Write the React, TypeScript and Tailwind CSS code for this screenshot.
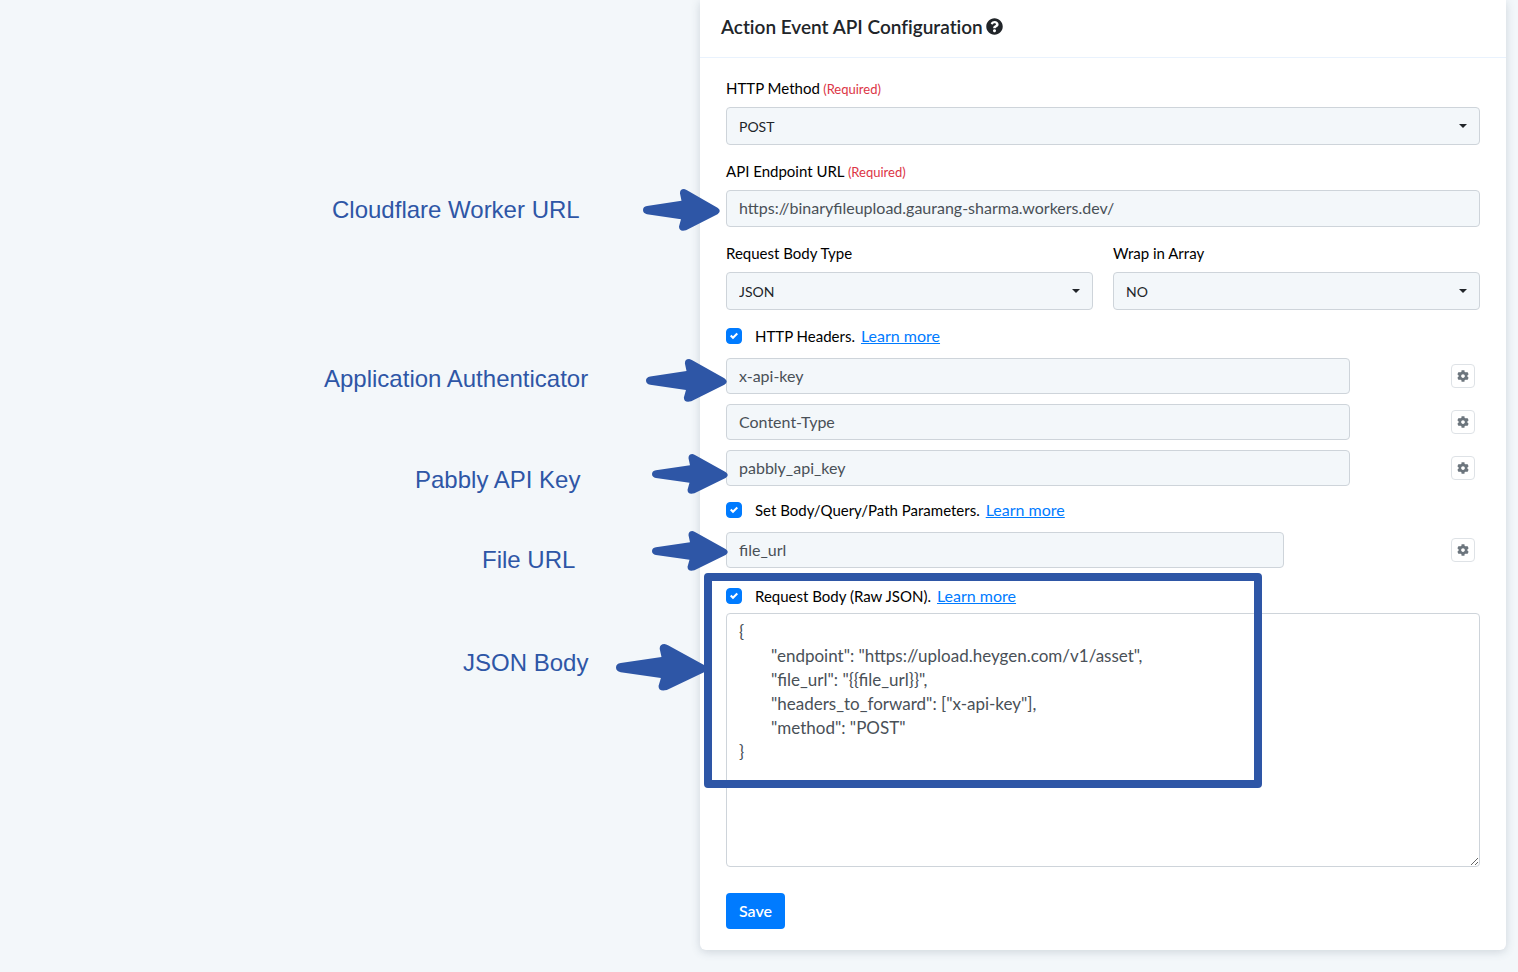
import { useState } from 'react'
import type { ReactNode } from 'react'
import { FaCog, FaQuestionCircle } from 'react-icons/fa'

const initialBody = `{
\t"endpoint": "https://upload.heygen.com/v1/asset",
\t"file_url": "{{file_url}}",
\t"headers_to_forward": ["x-api-key"],
\t"method": "POST"
}`

const callouts = [
    { text: 'Cloudflare Worker URL', label: 'left-[332px] top-[192px]', arrow: 'left-[643px] top-[189px] h-[42px] w-[77px]' },
    { text: 'Application Authenticator', label: 'left-[324px] top-[361px]', arrow: 'left-[646px] top-[359px] h-[43px] w-[81px]' },
    { text: 'Pabbly API Key', label: 'left-[415px] top-[462px]', arrow: 'left-[652px] top-[454px] h-10 w-[76px]' },
    { text: 'File URL', label: 'left-[482px] top-[542px]', arrow: 'left-[652px] top-[531px] h-10 w-[76px]' },
    { text: 'JSON Body', label: 'left-[463px] top-[645px]', arrow: 'left-[616px] top-[644px] h-[47px] w-[91px]' },
]

function Arrow({ className }: { className: string }) {
    return (
        <svg viewBox="0 0 77 42" preserveAspectRatio="none" className={'absolute fill-[#2e56a6] ' + className} aria-hidden="true">
            <path d="M4 17 L38.500 11.700 L37 4.500 Q36.800 0 41 0 Q42.500 .2 44 1.200 L74.500 18.800 Q79 22 74.500 25.200 L43 41.200 Q36 43 36 37.500 L38 30.300 L4 25.200 Q0 24.300 0 21 Q0 17.700 4 17 Z" />
        </svg>
    )
}

function Label({ htmlFor, required, children }: { htmlFor: string; required?: boolean; children: ReactNode }) {
    return (
        <label htmlFor={htmlFor} className="block h-[27px] text-[15px] leading-4 text-black">
            {children}
            {required && <span className="text-[13px] leading-none text-[#dc3545]"> (Required)</span>}
        </label>
    )
}

function Select({ id, options }: { id: string; options: string[] }) {
    return (
        <div className="relative">
            <select
                id={id}
                className="block h-[38px] w-full appearance-none rounded border border-[#ced4da] bg-[#f3f7fa] px-3 pt-[2px] text-sm text-[#212529]"
            >
                {options.map(o => <option key={o}>{o}</option>)}
            </select>
            <svg viewBox="0 0 8 4" className="pointer-events-none absolute right-[13px] top-[17px] h-1 w-2 fill-[#212529]" aria-hidden="true">
                <path d="M0 0h8L4 4z" />
            </svg>
        </div>
    )
}

function Toggle({ id, children }: { id: string; children: ReactNode }) {
    return (
        <div className="flex h-4 items-center text-[15px] text-black">
            <span className="relative mr-[13px] h-4 w-4">
                <input id={id} type="checkbox" defaultChecked className="peer block h-4 w-4 appearance-none rounded border border-[#adb5bd] checked:border-[#007bff] checked:bg-[#007bff]" />
                <svg viewBox="0 0 8 8" className="pointer-events-none absolute left-1 top-1 hidden h-2 w-2 fill-white peer-checked:block" aria-hidden="true">
                    <path d="M6.564.75l-3.590 3.612-1.538-1.550L0 4.260l2.974 2.990L8 2.193z" />
                </svg>
            </span>
            <label htmlFor={id}>{children}</label>
            <a href="#" className="ml-[6px] text-base text-[#007bff] underline">Learn more</a>
        </div>
    )
}

function ParamRow({ value, width }: { value: string; width: string }) {
    return (
        <div className="flex items-center justify-between pr-[5px]">
            <input
                aria-label={value}
                defaultValue={value}
                className={'h-9 rounded border border-[#ced4da] bg-[#f3f7fa] px-3 pb-[2px] text-base text-[#495057] ' + width}
            />
            <button type="button" aria-label={'Settings for ' + value} className="flex h-6 w-6 items-center justify-center rounded border border-[#dee2e6] bg-white text-[#6c757d]">
                <FaCog size={12} />
            </button>
        </div>
    )
}

export default function App() {
    const [body, setBody] = useState(initialBody)

    return (
        <div className="relative min-h-screen bg-[#f3f7fa] pb-[22px] pl-[700px] pr-3 font-[Lato,sans-serif]">
            <main className="rounded-b-md bg-white pb-[21px] shadow-[0_2px_10px_rgba(60,80,100,0.2)]">
                <header className="flex h-[58px] items-center gap-[3px] border-b border-[#e9f2fd] px-[21px] pb-1 text-[#212529]">
                    <h1 className="text-[19px] leading-6 font-semibold [font-variant-ligatures:none]">Action Event API Configuration</h1>
                    <FaQuestionCircle size={17} />
                </header>

                <form className="px-[26px] pt-[22px]" onSubmit={e => e.preventDefault()}>
                    <Label htmlFor="method" required>HTTP Method</Label>
                    <Select id="method" options={['POST', 'GET', 'PUT', 'PATCH', 'DELETE']} />

                    <div className="mt-[18px]">
                        <Label htmlFor="endpoint" required>API Endpoint URL</Label>
                        <input
                            id="endpoint"
                            defaultValue="https://binaryfileupload.gaurang-sharma.workers.dev/"
                            className="block h-[37px] w-full rounded border border-[#ced4da] bg-[#f3f7fa] px-3 pb-[2px] text-base text-[#495057]"
                        />
                    </div>

                    <div className="mt-[18px] grid grid-cols-2 gap-5">
                        <div>
                            <Label htmlFor="bodyType">Request Body Type</Label>
                            <Select id="bodyType" options={['JSON', 'Form Data', 'Raw']} />
                        </div>
                        <div>
                            <Label htmlFor="wrap">Wrap in Array</Label>
                            <Select id="wrap" options={['NO', 'YES']} />
                        </div>
                    </div>

                    <div className="mt-[18px]">
                        <Toggle id="headers">HTTP Headers.</Toggle>
                        <div className="mt-[14px] flex flex-col gap-[10px]">
                            <ParamRow value="x-api-key" width="w-[624px]" />
                            <ParamRow value="Content-Type" width="w-[624px]" />
                            <ParamRow value="pabbly_api_key" width="w-[624px]" />
                        </div>
                    </div>

                    <div className="mt-4">
                        <Toggle id="params">Set Body/Query/Path Parameters.</Toggle>
                        <div className="mt-[14px]">
                            <ParamRow value="file_url" width="w-[558px]" />
                        </div>
                    </div>

                    <div className="mt-5">
                        <Toggle id="raw">Request Body (Raw JSON).</Toggle>
                        <textarea
                            aria-label="Request body"
                            value={body}
                            onChange={e => setBody(e.target.value)}
                            className="mt-[9px] block h-[254px] w-full rounded border border-[#ced4da] bg-white px-3 py-[6px] text-[17px] leading-6 text-[#495057] [tab-size:32px]"
                        />
                    </div>

                    <button type="submit" className="mt-[26px] h-9 rounded bg-[#007bff] px-[13px] text-base font-semibold text-white">
                        Save
                    </button>
                </form>
            </main>

            {/* callouts drawn over the form */}
            <div className="pointer-events-none absolute inset-0 font-[Liberation_Sans,sans-serif] text-2xl leading-9 text-[#2e56a6]">
                {callouts.map(c => (
                    <div key={c.text}>
                        <span className={'absolute whitespace-nowrap ' + c.label}>{c.text}</span>
                        <Arrow className={c.arrow} />
                    </div>
                ))}
                <div className="absolute left-[704px] top-[573px] h-[215px] w-[558px] rounded border-8 border-[#2e56a6]" />
            </div>
        </div>
    )
}
